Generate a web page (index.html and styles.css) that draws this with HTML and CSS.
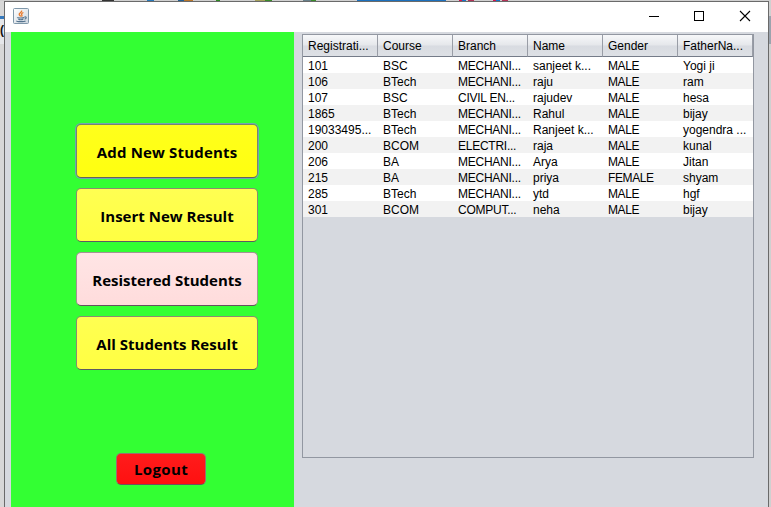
FILE: index.html
```html
<!DOCTYPE html>
<html lang="en">
<head>
<meta charset="utf-8">
<title>Students</title>
<link rel="stylesheet" href="styles.css">
</head>
<body>
<div class="backdrop"></div>
<div class="desktop">
<div class="edge-left">(</div>
<main class="window">
  <header class="titlebar">
    <svg class="java" width="16" height="16" viewBox="0 0 16 16">
      <defs><linearGradient id="tile" x2="1" y2="1"><stop offset="0" stop-color="#fff"/><stop offset="1" stop-color="#ccd6df"/></linearGradient></defs>
      <rect x=".5" y=".5" width="15" height="15" rx="1" fill="url(#tile)" stroke="#7f97aa"/>
      <path d="M8.6 2.5c1 1.700-3 2.600-2.400 4 .3.900 1.200 1.400 1.500 2M10.400 4.500c-2 1-2.300 1.700-1.500 2.500.4.600.1 1-.4 1.500" fill="none" stroke="#e8792b" stroke-width="1.300"/>
      <path d="M4.500 9.300c-1 .9 6 .8 6.700.2M5.300 11.300c1.200.5 4 .4 5 0M3.500 12.700c-.6 1.300 8 1.200 9 .1M11.400 9c2.600-.6 2.200 1.800.2 2.200" fill="none" stroke="#54738e" stroke-width="1.100"/>
    </svg>
    <svg class="controls" width="102" height="12" viewBox="0 0 102 12" fill="none" stroke="#000">
      <path d="M0 6.500h10M45.500 1.500h9v9h-9z" shape-rendering="crispEdges"/>
      <path d="M91 1l10 10M101 1L91 11" stroke-width="1.100"/>
    </svg>
  </header>
  <div class="content">
    <nav class="menu">
      <button class="btn focused">Add New Students</button>
      <button class="btn">Insert New Result</button>
      <button class="btn pink">Resistered Students</button>
      <button class="btn">All Students Result</button>
      <button class="btn logout">Logout</button>
    </nav>
    <section class="pane">
      <table>
        <thead><tr><th>Registrati...</th><th>Course</th><th>Branch</th><th>Name</th><th>Gender</th><th>FatherNa...</th></tr></thead>
        <tbody>
          <tr><td>101</td><td>BSC</td><td>MECHANI...</td><td>sanjeet k...</td><td>MALE</td><td>Yogi ji</td></tr>
          <tr><td>106</td><td>BTech</td><td>MECHANI...</td><td>raju</td><td>MALE</td><td>ram</td></tr>
          <tr><td>107</td><td>BSC</td><td>CIVIL EN...</td><td>rajudev</td><td>MALE</td><td>hesa</td></tr>
          <tr><td>1865</td><td>BTech</td><td>MECHANI...</td><td>Rahul</td><td>MALE</td><td>bijay</td></tr>
          <tr><td>19033495...</td><td>BTech</td><td>MECHANI...</td><td>Ranjeet k...</td><td>MALE</td><td>yogendra ...</td></tr>
          <tr><td>200</td><td>BCOM</td><td>ELECTRI...</td><td>raja</td><td>MALE</td><td>kunal</td></tr>
          <tr><td>206</td><td>BA</td><td>MECHANI...</td><td>Arya</td><td>MALE</td><td>Jitan</td></tr>
          <tr><td>215</td><td>BA</td><td>MECHANI...</td><td>priya</td><td>FEMALE</td><td>shyam</td></tr>
          <tr><td>285</td><td>BTech</td><td>MECHANI...</td><td>ytd</td><td>MALE</td><td>hgf</td></tr>
          <tr><td>301</td><td>BCOM</td><td>COMPUT...</td><td>neha</td><td>MALE</td><td>bijay</td></tr>
        </tbody>
      </table>
    </section>
  </div>
</main>
<div class="edge-right"></div>
</div>
</body>
</html>
```

FILE: styles.css
```css
* { box-sizing: border-box; }
body { margin: 0; height: 507px; overflow: hidden; background: #d0d0d0; }
.backdrop {
  height: 1px;
  background: linear-gradient(90deg, #d0d0d0 102px, #333 102px 114px, #d0d0d0 114px 147px, #2878b8 147px 154px, #d0d0d0 154px 178px, #245f91 178px 184px, #b9762b 184px 193px, #d0d0d0 193px 216px, #2d8a22 216px 220px, #d0d0d0 220px 255px, #a5a05c 255px 265px, #398b29 265px 272px, #d0d0d0 272px 303px, #68808a 303px 311px, #398b29 311px 316px, #d0d0d0 316px 357px, #1c70bd 357px 446px, #d0d0d0 446px 459px, #d3144f 459px 462px, #1874c5 462px 466px, #d0d0d0 466px 468px, #b23357 468px 474px, #d0d0d0 474px 493px, #d3144f 493px 496px, #1874c5 496px 500px, #d0d0d0 500px 502px, #b23357 502px 508px, #d0d0d0 508px);
}
.desktop { display: flex; height: 506px; }
.edge-left {
  width: 4px; padding-top: 22px; overflow: hidden;
  font: bold 12px/14px "Liberation Sans", sans-serif; color: #111;
  background: linear-gradient(#d7d7d7 15px, #3579bd 15px 18px, #e5e7ea 18px 43px, #d7d7d7 43px);
}
.edge-right { width: 2px; background: linear-gradient(#d0d0d0 15px, #9ba3ad 15px 43px, #d0d0d0 43px); }
.window { width: 765px; border: solid #6a6a6a; border-width: 1px 1px 0; background: #d6d9df; }
.titlebar { display: flex; justify-content: space-between; height: 30px; padding: 6px 17px 0 8px; background: #fff; }
.controls { margin-top: 2px; }
.content { display: flex; height: 475px; padding-left: 6px; }
.menu {
  display: flex; flex-direction: column; align-items: center; gap: 10px;
  width: 283px; padding: 92px 0 0 29px; background: #33ff33;
}
.btn {
  display: flex; align-items: center; justify-content: center; flex: none;
  width: 182px; height: 54px; padding: 1px 0 0; border: 1px solid #8b8b72; border-bottom-color: #5c5963;
  border-radius: 5px; background: linear-gradient(#ffff52, #ffff42);
  color: #000; font: bold 15px/20px "Open Sans", sans-serif; white-space: nowrap;
}
.btn.focused { letter-spacing: .17px; background: linear-gradient(#ffff1c, #ffff10); border-color: #77856f; border-bottom-color: #62645b; box-shadow: 0 0 0 1px #73a4b4; }
.btn.pink { background: linear-gradient(#ffe5e5, #ffdcdc); border-color: #a39494; border-bottom-color: #65515e; }
.btn.logout {
  width: 90px; height: 32px; margin: 73px 12px 0 0; padding-top: 0; letter-spacing: .35px;
  background: linear-gradient(#ff1c1c, #ff1010); border-color: #997070; border-bottom-color: #71505d;
}
.pane { width: 452px; height: 424px; margin: 2px 0 0 8px; border: 1px solid #9297a1; }
table { width: 450px; table-layout: fixed; border-collapse: separate; border-spacing: 0; font: 12px/16px "Liberation Sans", sans-serif; color: #000; }
th, td { padding: 0 0 0 5px; text-align: left; font-weight: normal; white-space: nowrap; overflow: hidden; }
th {
  height: 22px; border-right: 1px solid #999da6; border-bottom: 1px solid #747b88;
  background: linear-gradient(#f7f8fa, #e5e7eb 48%, #d8dbe1 52%, #dde0e5);
}
td { height: 16px; padding-top: 2px; line-height: 14px; background: #fff; }
td:nth-child(3) { letter-spacing: -.25px; }
td:nth-child(5) { letter-spacing: -.4px; }
tr:nth-child(even) td { background: #f2f2f2; }
```
